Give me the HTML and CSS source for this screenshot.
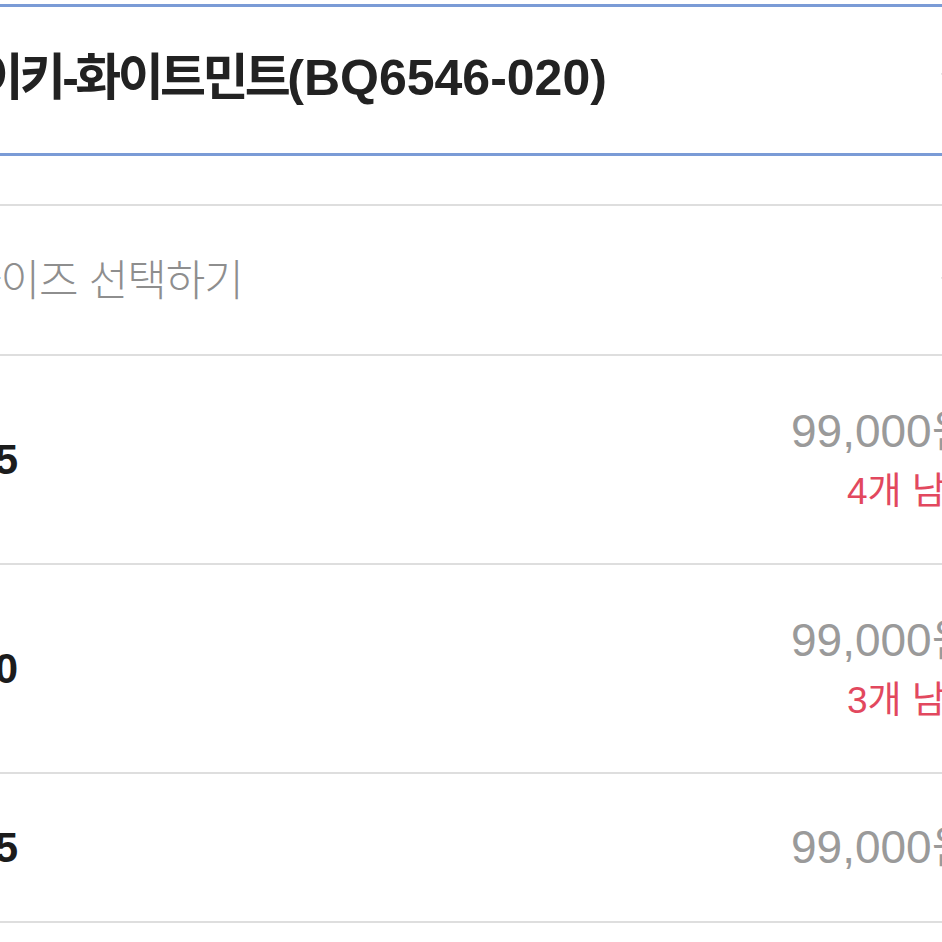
FILE: index.html
```html
<!DOCTYPE html>
<html lang="ko">
<head>
<meta charset="utf-8">
<link rel="stylesheet" href="styles.css">
</head>
<body>
<div class="page">
  <div class="select select-color">
    <span class="select-text title"><span class="ko">나이키-화이트민트</span>(BQ6546-020)</span>
    <svg class="chev" width="24" height="14" viewBox="0 0 24 14"><path d="M2 2 L12 12 L22 2" fill="none" stroke="#c4c4c4" stroke-width="2.5"/></svg>
  </div>
  <div class="select select-size">
    <span class="select-text placeholder">사이즈 선택하기</span>
    <svg class="chev" width="24" height="14" viewBox="0 0 24 14"><path d="M2 2 L12 12 L22 2" fill="none" stroke="#c4c4c4" stroke-width="2.5"/></svg>
  </div>
  <ul class="options">
    <li class="option tall">
      <span class="size">245</span>
      <div class="meta">
        <span class="price">99,000원</span>
        <span class="stock">4개 남음</span>
      </div>
    </li>
    <li class="option tall">
      <span class="size">250</span>
      <div class="meta">
        <span class="price">99,000원</span>
        <span class="stock">3개 남음</span>
      </div>
    </li>
    <li class="option">
      <span class="size">255</span>
      <div class="meta">
        <span class="price">99,000원</span>
      </div>
    </li>
  </ul>
</div>
</body>
</html>
```

FILE: styles.css
```css
html, body {
  margin: 0;
  padding: 0;
  background: #fff;
  overflow: hidden;
  width: 942px;
  height: 942px;
}

.page {
  margin-left: -100px;
  width: 1120px;
  padding-top: 4px;
  font-family: "Liberation Sans", "Noto Sans CJK KR", sans-serif;
}

.select {
  display: flex;
  align-items: center;
  justify-content: space-between;
  box-sizing: border-box;
  padding: 0 56px 0 27px;
}

.select-color {
  height: 152px;
  border-top: 3px solid #7a9bd6;
  border-bottom: 3px solid #7a9bd6;
  padding-bottom: 4px;
}

.select-size {
  margin-top: 48px;
  height: 152px;
  border-top: 2px solid #dedede;
  border-bottom: 2px solid #dedede;
  padding-left: 62px;
  padding-top: 4px;
}

.select-text {
  white-space: nowrap;
  line-height: 1.2;
}

.title {
  font-size: 50px;
  font-weight: 700;
  color: #222;
  margin-left: 8px;
}

.title .ko {
  letter-spacing: -3.6px;
}

.placeholder {
  font-size: 43px;
  font-weight: 300;
  color: #8e8e8e;
  letter-spacing: -1px;
}

.chev {
  flex: none;
}

.options {
  list-style: none;
  margin: 0;
  padding: 0;
}

.option {
  display: flex;
  align-items: center;
  justify-content: space-between;
  box-sizing: border-box;
  height: 149px;
  border-bottom: 2px solid #dedede;
  padding: 0 46px 0 50px;
}

.option.tall {
  height: 209px;
}

.size {
  font-size: 42px;
  font-weight: 700;
  color: #1c1c1c;
  margin-left: -2px;
}

.meta {
  display: flex;
  flex-direction: column;
  align-items: flex-end;
  gap: 16px;
}

.price {
  font-size: 46px;
  color: #9a9a9a;
  white-space: nowrap;
  line-height: 1.1;
}

.stock {
  font-size: 37px;
  color: #e2485e;
  white-space: nowrap;
  line-height: 1.1;
  margin-right: -6px;
}
```
